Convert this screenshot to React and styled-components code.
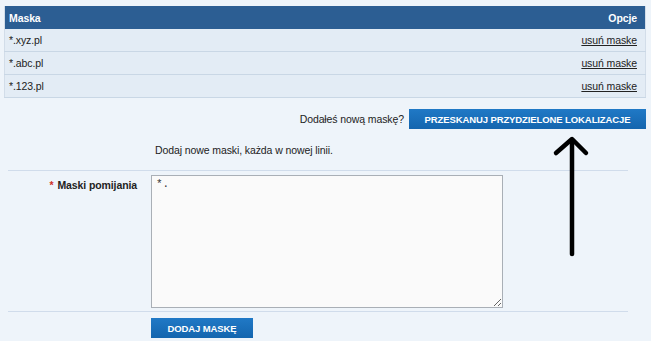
import styled, { createGlobalStyle } from 'styled-components'

const GlobalStyle = createGlobalStyle`
  body {
    margin: 0;
    background: #eef4fa;
    font-family: "Liberation Sans", Arial, sans-serif;
    font-size: 10.5px;
    letter-spacing: -0.1px;
    color: #222;
  }
`

const Page = styled.div`
  position: relative;
  padding: 3px 5px 0 4px;
  height: 338px;
`

const Table = styled.table`
  width: 100%;
  border-collapse: collapse;
  border: 1px solid #d2dde9;
  border-top: 3px solid #eef4fa;
`

const HeadCell = styled.th`
  height: 23px;
  padding: 0 8px 0 4px;
  background: #2c5e93;
  color: #fff;
  font-weight: bold;
  font-size: 10.5px;
  text-align: ${p => p.$align || 'left'};
`

const Cell = styled.td`
  height: 22px;
  padding: 0 8px 0 4px;
  background: #e3ecf5;
  border-bottom: 1px solid #c9d7e5;
  text-align: ${p => p.$align || 'left'};
`

const RemoveLink = styled.a`
  color: #222;
  text-decoration: underline;
  cursor: pointer;
`

const ScanRow = styled.div`
  display: flex;
  justify-content: flex-end;
  align-items: center;
  gap: 5px;
  margin-top: 11px;
`

const Button = styled.button`
  width: ${p => p.$w}px;
  height: 20px;
  padding: 0;
  border: none;
  background: linear-gradient(#2079c6, #1465ae);
  color: #fff;
  font-family: "Liberation Sans", Arial, sans-serif;
  font-size: 9.5px;
  letter-spacing: -0.1px;
  font-weight: bold;
  white-space: nowrap;
  cursor: pointer;
`

const Hint = styled.div`
  margin-top: 14px;
  padding-left: 151px;
  line-height: 14px;
`

const FormRow = styled.div`
  display: grid;
  grid-template-columns: 129px 1fr;
  column-gap: 14px;
  margin: ${p => p.$mt || 0}px 18px 0 4px;
  padding: ${p => p.$pt}px 0 ${p => p.$pb}px;
  border-top: 1px solid #d0dceb;
`

const Label = styled.label`
  text-align: right;
  font-weight: bold;
  padding-top: 4px;
  color: #222;
`

const Required = styled.span`
  color: #d0302a;
  margin-right: 4px;
`

const TextArea = styled.textarea`
  width: 352px;
  height: 133px;
  box-sizing: border-box;
  border: 1px solid #a9afb6;
  background: #fafafa;
  padding: 2px 4px;
  font-family: "Liberation Mono", monospace;
  font-size: 11px;
  letter-spacing: 0;
  color: #333;
  resize: both;
`

const Arrow = styled.svg`
  position: absolute;
  left: 550px;
  top: 134px;
`

const masks = ['*.xyz.pl', '*.abc.pl', '*.123.pl']

export default function App() {
  return (
    <Page>
      <GlobalStyle />
      <Table>
        <thead>
          <tr>
            <HeadCell>Maska</HeadCell>
            <HeadCell $align="right">Opcje</HeadCell>
          </tr>
        </thead>
        <tbody>
          {masks.map(m => (
            <tr key={m}>
              <Cell>{m}</Cell>
              <Cell $align="right">
                <RemoveLink>usuń maske</RemoveLink>
              </Cell>
            </tr>
          ))}
        </tbody>
      </Table>
      <ScanRow>
        <span>Dodałeś nową maskę?</span>
        <Button $w={237}>PRZESKANUJ PRZYDZIELONE LOKALIZACJE</Button>
      </ScanRow>
      <Hint>Dodaj nowe maski, każda w nowej linii.</Hint>
      <FormRow $mt={13} $pt={4} $pb={3}>
        <Label>
          <Required>*</Required>Maski pomijania
        </Label>
        <TextArea defaultValue="*." />
      </FormRow>
      <FormRow $pt={6} $pb={0}>
        <span />
        <div>
          <Button $w={102}>DODAJ MASKĘ</Button>
        </div>
      </FormRow>
      <Arrow width="44" height="126" viewBox="0 0 44 126">
        <g fill="none" stroke="#000" strokeWidth="4.5" strokeLinecap="round" strokeLinejoin="round">
          <path d="M22 6 L22 120" />
          <path d="M6 19 L22 5 L36 19" />
        </g>
      </Arrow>
    </Page>
  )
}
